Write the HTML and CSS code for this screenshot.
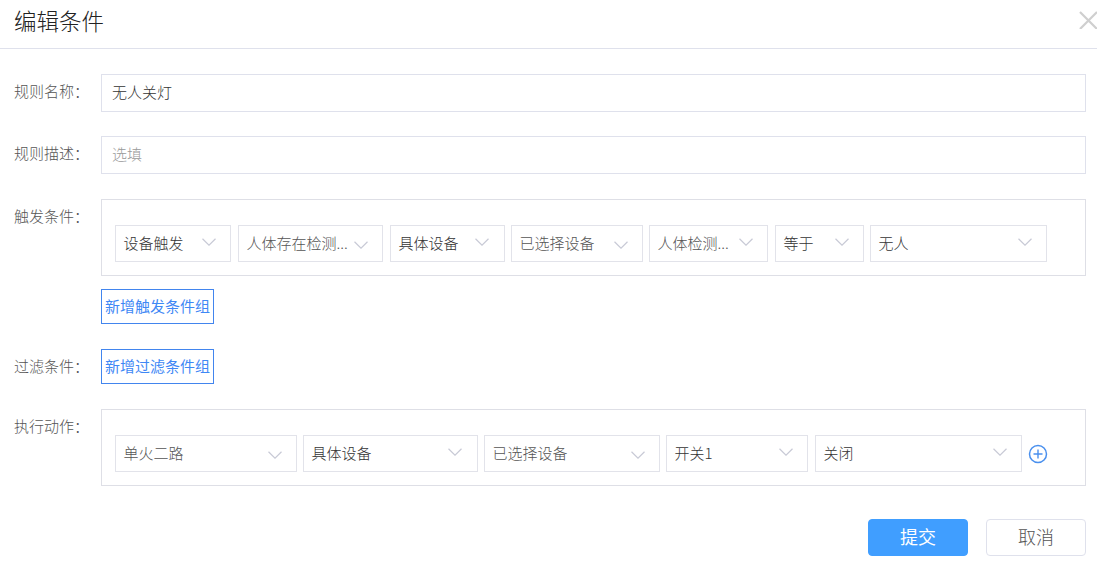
FILE: index.html
```html
<!DOCTYPE html>
<html lang="zh">
<head>
<meta charset="utf-8">
<title>编辑条件</title>
<link rel="stylesheet" href="styles.css">
</head>
<body>
<svg class="defs" width="0" height="0"><symbol id="chev" viewBox="0 0 14 8"><path d="M.5.8 7 7.2 13.5.8" fill="none" stroke="#c8cad6" stroke-width="1.2"/></symbol></svg>
<div class="dialog">
  <header class="head">
    <h1 class="title">编辑条件</h1>
    <svg class="close" width="18" height="18" viewBox="0 0 18 18"><path d="M1 1 18 18M18 1 1 18" stroke="#cfcfcf" stroke-width="2.2" fill="none"/></svg>
  </header>
  <form class="form">
    <div class="row r-name">
      <label class="label">规则名称：</label>
      <div class="input dark">无人关灯</div>
    </div>
    <div class="row r-desc">
      <label class="label">规则描述：</label>
      <div class="input ph">选填</div>
    </div>
    <div class="row r-trig">
      <label class="label">触发条件：</label>
      <div class="content">
        <div class="box">
          <div class="sel w116 dark">设备触发<svg class="chev"><use href="#chev"/></svg></div>
          <div class="sel w145 g7 low">人体存在检测...<svg class="chev"><use href="#chev"/></svg></div>
          <div class="sel w115 g7 dark">具体设备<svg class="chev c23"><use href="#chev"/></svg></div>
          <div class="sel w132 low">已选择设备<svg class="chev"><use href="#chev"/></svg></div>
          <div class="sel w119 mid">人体检测...<svg class="chev"><use href="#chev"/></svg></div>
          <div class="sel w89 g7 dark">等于<svg class="chev"><use href="#chev"/></svg></div>
          <div class="sel w177 dark">无人<svg class="chev"><use href="#chev"/></svg></div>
        </div>
        <button type="button" class="add">新增触发条件组</button>
      </div>
    </div>
    <div class="row r-filter">
      <label class="label lb-filter">过滤条件：</label>
      <button type="button" class="add flush">新增过滤条件组</button>
    </div>
    <div class="row r-act">
      <label class="label">执行动作：</label>
      <div class="box wide">
        <div class="sel w182 low">单火二路<svg class="chev"><use href="#chev"/></svg></div>
        <div class="sel w175 dark">具体设备<svg class="chev c23"><use href="#chev"/></svg></div>
        <div class="sel w176 low">已选择设备<svg class="chev"><use href="#chev"/></svg></div>
        <div class="sel w142 dark">开关1<svg class="chev"><use href="#chev"/></svg></div>
        <div class="sel w207 g7 dark">关闭<svg class="chev"><use href="#chev"/></svg></div>
        <svg class="plus" width="20" height="20" viewBox="0 0 20 20"><circle cx="10" cy="10" r="8.5" fill="none" stroke="#4a90ee" stroke-width="1.5"/><path d="M5.5 10h9M10 5.5v9" stroke="#4a90ee" stroke-width="1.4"/></svg>
      </div>
    </div>
    <div class="foot">
      <button type="button" class="btn primary">提交</button>
      <button type="button" class="btn">取消</button>
    </div>
  </form>
</div>
</body>
</html>
```
FILE: styles.css
```css
* { box-sizing: border-box; }
html, body { margin: 0; padding: 0; background: #fff; }
body {
  width: 1097px;
  height: 569px;
  overflow: hidden;
  font-family: "Noto Sans CJK SC", "Liberation Sans", sans-serif;
  font-size: 15px;
  font-weight: 300;
  color: #606266;
}
.defs { display: block; height: 0; }
.head {
  height: 49px;
  border-bottom: 1px solid #dfe1ec;
  display: flex;
  justify-content: space-between;
  align-items: flex-start;
  padding: 0 0 0 14px;
}
.title { margin: 0; font-size: 22.5px; font-weight: 300; color: #222; line-height: 41px; }
.close { margin-top: 11px; }
.form { padding: 25px 11px 0 14px; }
.row { display: flex; align-items: flex-start; }
.label { width: 87px; flex: none; line-height: 33px; color: #555; font-size: 15px; }
.input {
  flex: 1;
  height: 38px;
  line-height: 34px;
  border: 1px solid #dfe1ec;
  padding: 0 10px;
}
.ph { color: #999; height: 38px; }
.dark { color: #333; }
.mid { color: #555; }
.r-desc { margin-top: 24px; }
.r-trig { margin-top: 25px; }
.content { flex: 1; }
.box {
  display: flex;
  align-items: center;
  gap: 6px;
  height: 77px;
  border: 1px solid #dedfe6;
  padding: 25px 13px 13px;
}
.box.wide { flex: 1; }
.sel {
  position: relative;
  flex: none;
  height: 37px;
  line-height: 33px;
  border: 1px solid #e2e3ea;
  padding-left: 7.5px;
  white-space: nowrap;
}
.low { color: #555; }
.g7 { margin-left: 1px; }
.w89 { width: 89px; }
.w115 { width: 115px; }
.w116 { width: 116px; }
.w119 { width: 119px; }
.w132 { width: 132px; }
.w142 { width: 142px; }
.w145 { width: 145px; }
.w175 { width: 175px; }
.w176 { width: 176px; }
.w177 { width: 177px; }
.w182 { width: 182px; }
.w207 { width: 207px; }
.chev { position: absolute; right: 14px; top: 12px; width: 14px; height: 8px; }
.low .chev { top: 15px; }
.c23 { right: 15px; }
.plus { flex: none; }
.add {
  display: block;
  width: 113px;
  height: 35px;
  margin-top: 13px;
  padding: 0 0 2px;
  background: #fff;
  border: 1px solid #4285ee;
  border-radius: 0;
  color: #3f88f5;
  font: inherit;
  font-size: 15px;
  font-weight: 400;
  line-height: 30px;
}
.add.flush { margin-top: 0; }
.r-filter { margin-top: 25px; }
.lb-filter { line-height: 33px; }
.r-act { margin-top: 25px; }
.foot { display: flex; justify-content: flex-end; gap: 18px; margin-top: 33px; }
.btn {
  width: 100px;
  height: 37px;
  padding: 0 0 3px;
  background: #fff;
  border: 1px solid #dfe1ec;
  border-radius: 4px;
  color: #555;
  font: inherit;
  font-size: 18px;
  line-height: 31px;
}
.primary { background: #409eff; border-color: #409eff; color: #fff; font-weight: 400; }
```
